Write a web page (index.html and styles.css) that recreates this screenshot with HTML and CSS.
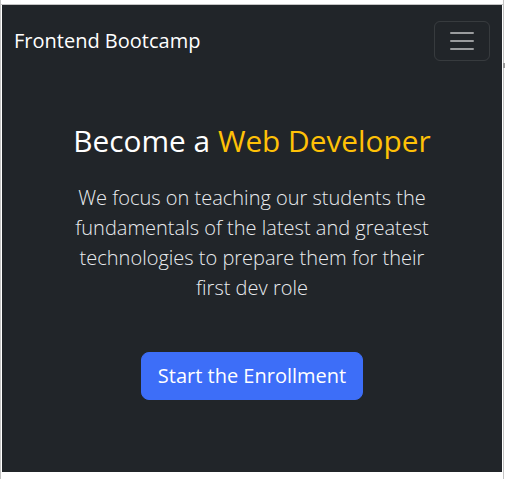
FILE: index.html
```html
<!DOCTYPE html>
<html lang="en">
<head>
<meta charset="utf-8">
<title>Frontend Bootcamp</title>
<link rel="stylesheet" href="styles.css">
</head>
<body>
<div class="viewport">
  <div class="rule"></div>
  <div class="page">
    <nav class="navbar">
      <a class="brand" href="#">Frontend Bootcamp</a>
      <button class="toggler" type="button" aria-label="Toggle navigation">
        <svg class="toggler-icon" viewBox="0 0 30 30" width="30" height="30">
          <path d="M4 7h22M4 15h22M4 23h22" stroke="rgba(255,255,255,0.55)" stroke-width="2" stroke-linecap="round" stroke-miterlimit="10" fill="none"/>
        </svg>
      </button>
    </nav>
    <section class="hero">
      <h1 class="title">Become a <span class="accent">Web Developer</span></h1>
      <p class="lead">We focus on teaching our students the fundamentals of the latest and greatest technologies to prepare them for their first dev role</p>
      <a class="btn" href="#">Start the Enrollment</a>
    </section>
  </div>
  <span class="edge-mark"></span>
</div>
</body>
</html>
```

FILE: styles.css
```css
* { box-sizing: border-box; }

html, body {
  margin: 0;
  padding: 0;
  background: #ffffff;
}

body {
  font-family: "Open Sans", "Noto Sans", sans-serif;
  width: 505px;
  height: 479px;
  overflow: hidden;
}

.viewport {
  position: relative;
  width: 504px;
  height: 479px;
  border-left: 1px solid #c4c4c4;
  border-right: 1px solid #c4c4c4;
  padding-top: 4px;
}

.rule {
  height: 1px;
  background: #c4c4c4;
}

.page {
  margin: 0 1px;
  width: 500px;
  height: 467px;
  background: #212529;
  color: #ffffff;
}

.navbar {
  display: flex;
  align-items: center;
  justify-content: space-between;
  padding: 16px 12px;
  height: 72px;
}

.brand {
  color: #ffffff;
  text-decoration: none;
  font-size: 20px;
  line-height: 30px;
}

.toggler {
  width: 56px;
  height: 40px;
  padding: 4px 12px;
  background: transparent;
  border: 1px solid rgba(255, 255, 255, 0.1);
  border-radius: 6px;
  display: flex;
  align-items: center;
  justify-content: center;
}

.toggler-icon {
  display: block;
}

.hero {
  padding: 46px 48px 0;
  display: flex;
  flex-direction: column;
  align-items: center;
  text-align: center;
}

.title {
  margin: 0 0 24px;
  font-size: 29.8px;
  font-weight: 500;
  line-height: 1.2;
  color: #ffffff;
  white-space: nowrap;
}

.accent {
  color: #ffc107;
}

.lead {
  margin: 0 0 49px;
  width: 380px;
  font-size: 20px;
  font-weight: 300;
  line-height: 30px;
  color: #e9ecef;
}

.btn {
  display: inline-block;
  padding: 8px 16px;
  font-size: 20px;
  line-height: 30px;
  color: #ffffff;
  background: #3d6ef8;
  border: 1px solid #3d6ef8;
  border-radius: 8px;
  text-decoration: none;
}

.edge-mark {
  position: absolute;
  left: 502px;
  top: 63px;
  width: 3px;
  height: 5px;
  background: #9a9a9a;
}
```
